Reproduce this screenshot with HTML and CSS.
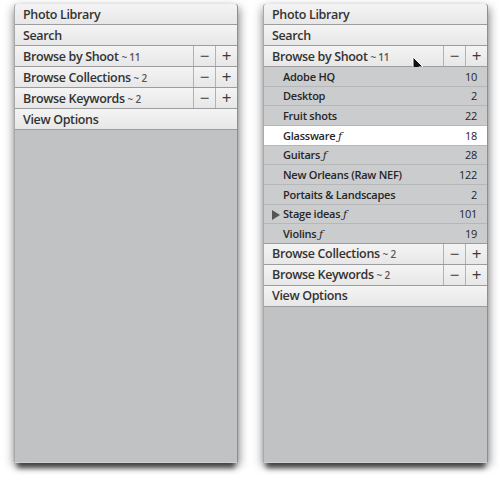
FILE: index.html
```html
<!DOCTYPE html>
<html lang="en">
<head>
   <meta charset="UTF-8">
   <title>Photo Library</title>
   <link rel="stylesheet" href="styles.css">
</head>
<body>
<div class="root_container">

   <div class="panel">
      <div class="header">Photo Library</div>
      <div class="header">Search</div>
      <div class="header split">
         <span class="label">Browse by Shoot <small>~ 11</small></span>
         <span class="btn">&minus;</span><span class="btn">+</span>
      </div>
      <div class="header split">
         <span class="label">Browse Collections <small>~ 2</small></span>
         <span class="btn">&minus;</span><span class="btn">+</span>
      </div>
      <div class="header split">
         <span class="label">Browse Keywords <small>~ 2</small></span>
         <span class="btn">&minus;</span><span class="btn">+</span>
      </div>
      <div class="header">View Options</div>
      <div class="fill"></div>
   </div>

   <div class="panel">
      <div class="header">Photo Library</div>
      <div class="header">Search</div>
      <div class="header split hover">
         <span class="label">Browse by Shoot <small>~ 11</small></span>
         <span class="btn">&minus;</span><span class="btn">+</span>
         <svg class="cursor" width="13" height="19" viewBox="0 0 13 19">
            <path d="M1 1 L1 15 L4.3 11.8 L6.8 17.5 L9 16.5 L6.6 11 L11 11 Z" fill="#111" stroke="#fff" stroke-width="1"/>
         </svg>
      </div>
      <div class="list">
         <div class="item"><span>Adobe HQ</span><span class="count">10</span></div>
         <div class="item"><span>Desktop</span><span class="count">2</span></div>
         <div class="item"><span>Fruit shots</span><span class="count">22</span></div>
         <div class="item selected"><span>Glassware <i>&#402;</i></span><span class="count">18</span></div>
         <div class="item"><span>Guitars <i>&#402;</i></span><span class="count">28</span></div>
         <div class="item"><span>New Orleans (Raw NEF)</span><span class="count">122</span></div>
         <div class="item"><span>Portaits &amp; Landscapes</span><span class="count">2</span></div>
         <div class="item"><span class="arrow"></span><span>Stage ideas <i>&#402;</i></span><span class="count">101</span></div>
         <div class="item"><span>Violins <i>&#402;</i></span><span class="count">19</span></div>
      </div>
      <div class="header split">
         <span class="label">Browse Collections <small>~ 2</small></span>
         <span class="btn">&minus;</span><span class="btn">+</span>
      </div>
      <div class="header split">
         <span class="label">Browse Keywords <small>~ 2</small></span>
         <span class="btn">&minus;</span><span class="btn">+</span>
      </div>
      <div class="header">View Options</div>
      <div class="fill"></div>
   </div>

</div>
</body>
</html>
```

FILE: styles.css
```css
:root {
   --row-height: 21px;
   --item-height: 19.67px;
   --line: #9c9c9e;
}

* {
   box-sizing: border-box;
}

html, body {
   height: 100%;
}

body {
   margin: 0;
   background: #fff;
   font-family: "Open Sans", "Noto Sans", sans-serif;
   color: #333;
}

.root_container {
   display: flex;
   align-items: flex-start;
   gap: 25px;
   height: 100%;
   padding: 4px 0 0 14px;
}

.panel {
   position: relative;
   display: flex;
   flex-direction: column;
   width: 224px;
   height: 459px;
   border-left: 1px solid #a8a8aa;
   border-right: 1px solid #8e8e90;
   border-bottom: 1px solid #d0d1d3;
   border-radius: 3px 3px 0 0;
   background: #c1c2c4;
   box-shadow: 0 8px 5px -3px rgba(0, 0, 0, 0.6), 3px 3px 8px rgba(0, 0, 0, 0.3), -3px 3px 8px rgba(0, 0, 0, 0.22);
}

.panel + .panel {
   width: 225px;
}

.header {
   display: flex;
   align-items: center;
   height: var(--row-height);
   padding-left: 8px;
   border-bottom: 1px solid var(--line);
   background: linear-gradient(#f4f4f4, #e7e7e7);
   font-size: 12.5px;
   font-weight: 600;
   letter-spacing: -0.35px;
   white-space: nowrap;
}

.header:first-child {
   border-radius: 3px 3px 0 0;
}

.split {
   position: relative;
   padding-left: 0;
}

.split .label {
   flex: 1;
   padding-left: 8px;
}

.header small {
   font-size: 10px;
   color: #555;
   letter-spacing: -0.2px;
}

.btn {
   display: flex;
   align-items: center;
   justify-content: center;
   width: 22px;
   height: 100%;
   border-left: 1px solid #b2b2b4;
   font-size: 17px;
   font-weight: 400;
   color: #3a3a3a;
   padding-bottom: 1px;
}

.cursor {
   position: absolute;
   left: 148px;
   top: 10px;
}

.list {
   display: flex;
   flex-direction: column;
}

.item {
   display: flex;
   align-items: center;
   height: var(--item-height);
   padding: 0 10px 0 19px;
   border-bottom: 1px solid #b6b7b9;
   background: #cbccce;
   font-size: 11px;
   font-weight: 600;
   letter-spacing: -0.25px;
   color: #262626;
   position: relative;
}

.item:last-child {
   border-bottom-color: var(--line);
}

.item.selected {
   background: #fff;
}

.item i {
   font-style: italic;
   font-family: "DejaVu Serif", serif;
   font-weight: 400;
}

.item .count {
   margin-left: auto;
   font-weight: 500;
}

.arrow {
   position: absolute;
   left: 8px;
   top: 5px;
   width: 0;
   height: 0;
   border-top: 5px solid transparent;
   border-bottom: 5px solid transparent;
   border-left: 8px solid #555;
}

.fill {
   flex: 1;
   background: #c1c2c4;
}
```
